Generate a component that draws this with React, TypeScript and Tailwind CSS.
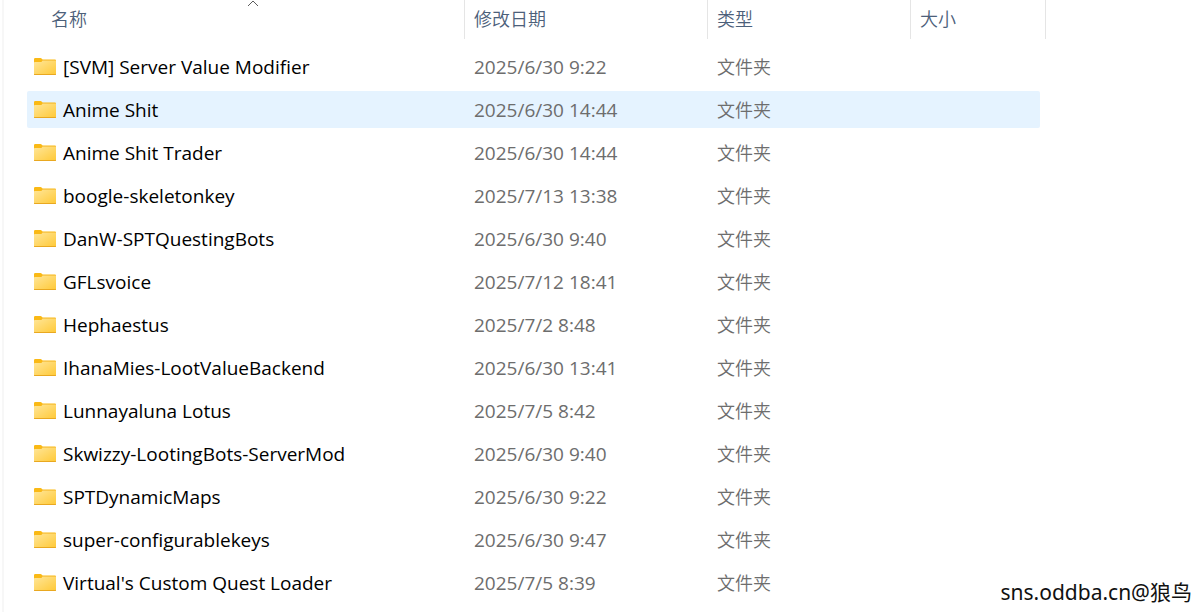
import clsx from 'clsx';

interface Entry {
  name: string;
  modified: string;
}

const FOLDERS: Entry[] = [
  { name: '[SVM] Server Value Modifier', modified: '2025/6/30 9:22' },
  { name: 'Anime Shit', modified: '2025/6/30 14:44' },
  { name: 'Anime Shit Trader', modified: '2025/6/30 14:44' },
  { name: 'boogle-skeletonkey', modified: '2025/7/13 13:38' },
  { name: 'DanW-SPTQuestingBots', modified: '2025/6/30 9:40' },
  { name: 'GFLsvoice', modified: '2025/7/12 18:41' },
  { name: 'Hephaestus', modified: '2025/7/2 8:48' },
  { name: 'IhanaMies-LootValueBackend', modified: '2025/6/30 13:41' },
  { name: 'Lunnayaluna Lotus', modified: '2025/7/5 8:42' },
  { name: 'Skwizzy-LootingBots-ServerMod', modified: '2025/6/30 9:40' },
  { name: 'SPTDynamicMaps', modified: '2025/6/30 9:22' },
  { name: 'super-configurablekeys', modified: '2025/6/30 9:47' },
  { name: "Virtual's Custom Quest Loader", modified: '2025/7/5 8:39' },
];

const COLUMNS = ['名称', '修改日期', '类型', '大小'];

const FolderIcon = () => (
  <svg width="22" height="18" viewBox="0 0 22 18" className="shrink-0" aria-hidden="true">
    <defs>
      <linearGradient id="folder-front" x1="0" y1="0" x2="1" y2="1">
        <stop offset="0" stopColor="#ffe699" />
        <stop offset="1" stopColor="#ffca3a" />
      </linearGradient>
    </defs>
    <path d="M0 1.2Q0 0 1.2 0H6.5Q7.3 0 7.8.7L8.6 1.5H21Q22 1.5 22 2.5V6H0Z" fill="#fab915" />
    <path d="M0 4.6Q0 4 .8 4H6.6Q7.3 4 7.8 3.4L8.5 2.5H22V16.5Q22 17 21.2 17H.8Q0 17 0 16.4Z" fill="#e9a820" />
    <path d="M0 4.6Q0 4 .8 4H6.6Q7.3 4 7.8 3.4L8.5 2.5H22V15.5Q22 16 21.2 16H.8Q0 16 0 15.4Z" fill="url(#folder-front)" />
  </svg>
);

const SortArrow = () => (
  <svg
    width="12"
    height="7"
    viewBox="0 0 12 7"
    className="absolute top-0 left-1/2 -translate-x-1/2"
    fill="none"
    stroke="#5c5c5c"
    aria-hidden="true"
  >
    <path d="M1 6L6 1L11 6" />
  </svg>
);

export default function App() {
  return (
    <div className="relative min-h-screen bg-white pl-0.5 font-['Open_Sans','Noto_Sans_CJK_SC',sans-serif]">
      <div className="min-h-screen border-l-2 border-[#f7f7f7] pl-[23px]">
        <table className="block text-left">
          <thead className="block pl-[15px]">
            <tr className="grid h-[39px] grid-cols-[423px_243px_203px_135px]">
              {COLUMNS.map((label, i) => (
                <th key={label} className="relative border-r border-[#e5e5e5] p-0 font-normal">
                  {i === 0 && <SortArrow />}
                  <button className="flex h-full w-full items-center pb-0.5 pl-[9px] font-['Noto_Sans_CJK_SC',sans-serif] text-[18px] font-[350] text-[#4c607a]">
                    {label}
                  </button>
                </th>
              ))}
            </tr>
          </thead>

          <tbody className="mt-[9px] flex flex-col gap-1.5">
            {FOLDERS.map((folder, i) => (
              <tr
                key={folder.name}
                className={clsx(
                  'grid h-[37px] w-[1013px] grid-cols-[438px_243px_203px_129px] items-center rounded-xs text-[19px] text-[#6d6d6d]',
                  i === 1 && 'bg-[#e5f3ff]',
                )}
              >
                <td className="flex items-center gap-[7px] py-0 pl-[7px] text-black">
                  <FolderIcon />
                  <span className="pt-0.5">{folder.name}</span>
                </td>
                <td className="pt-0.5 pb-0 pl-[9px]">{folder.modified}</td>
                <td className="py-0 pl-[9px] font-['Noto_Sans_CJK_SC',sans-serif] text-[18px] font-[350]">文件夹</td>
                <td />
              </tr>
            ))}
          </tbody>
        </table>
      </div>

      {/* Watermark */}
      <div className="absolute right-2 bottom-1.5 font-['Noto_Sans','Noto_Sans_CJK_SC',sans-serif] text-[21px] leading-7 text-[#111]">
        sns.oddba.cn@狼鸟
      </div>
    </div>
  );
}
